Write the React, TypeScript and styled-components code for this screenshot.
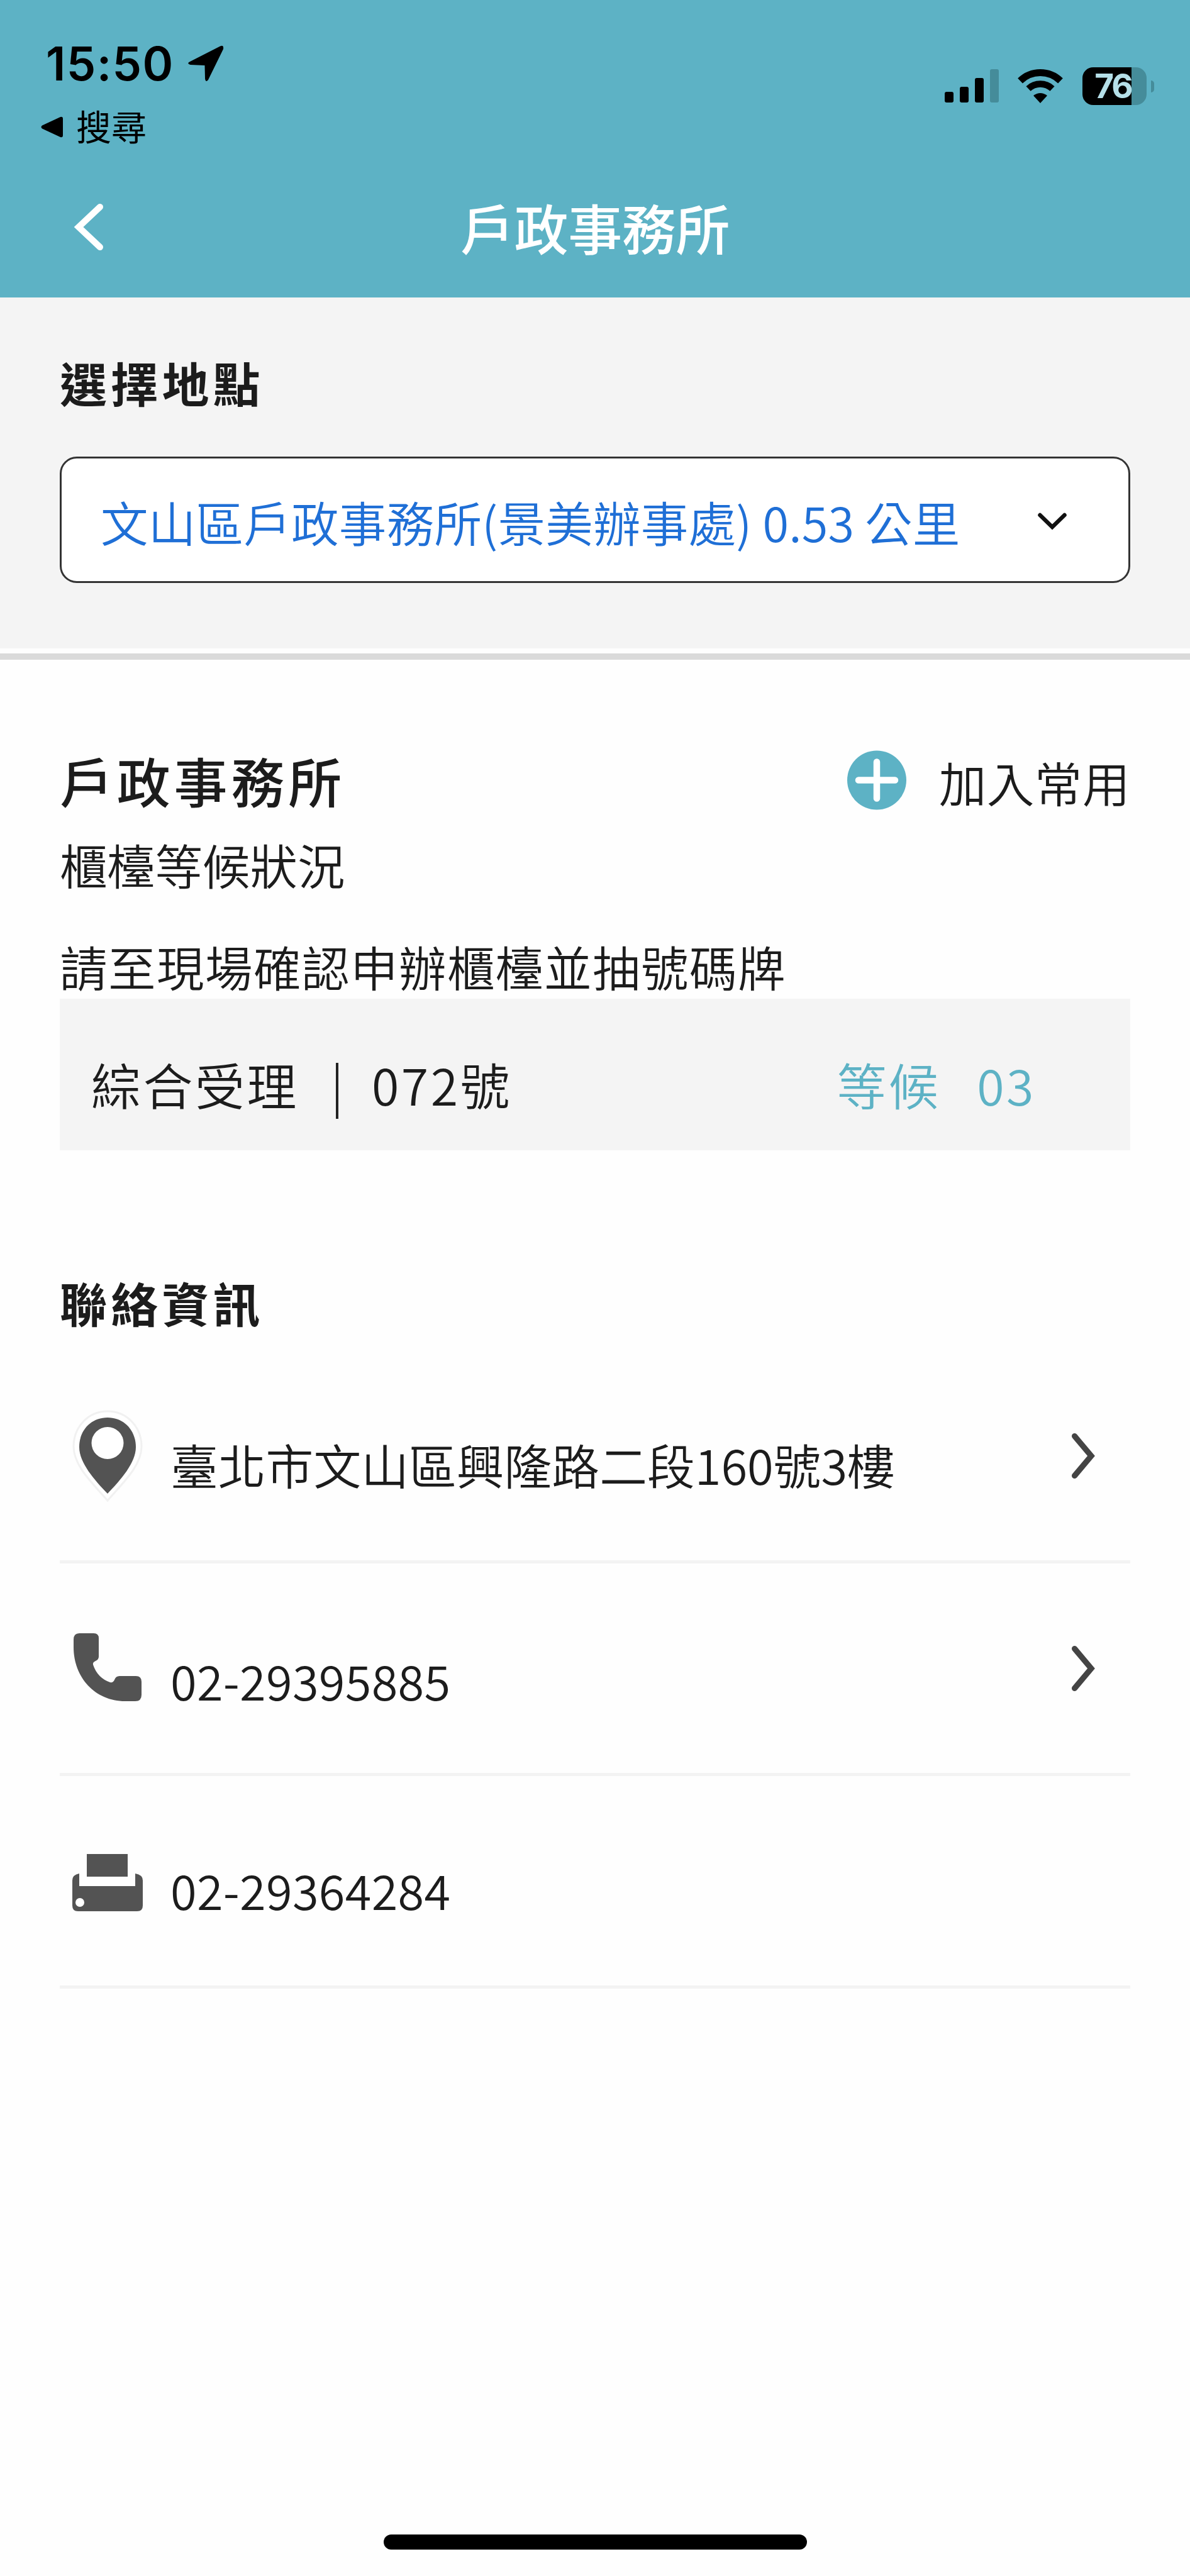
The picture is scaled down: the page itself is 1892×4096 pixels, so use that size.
import React from 'react';
import styled, { createGlobalStyle } from 'styled-components';

const teal = '#5db2c5';

const GlobalStyle = createGlobalStyle`
  * { box-sizing: border-box; }
  body {
    margin: 0;
    background: #fefefe;
    color: #1c1c1c;
    font-family: "Noto Sans CJK TC", "Noto Sans", sans-serif;
    font-weight: 350;
    white-space: nowrap;
  }
`;

const Screen = styled.div`
  width: 1892px;
  height: 4096px;
  display: flex;
  flex-direction: column;
  overflow: hidden;
`;

const Header = styled.header`
  height: 473px;
  flex: none;
  background: ${teal};
`;

const StatusBar = styled.div`
  height: 249px;
  display: flex;
  justify-content: space-between;
  align-items: flex-start;
  color: #000;
`;

const StatusLeft = styled.div`
  padding: 71px 0 0 65px;
`;

const Clock = styled.div`
  display: flex;
  align-items: center;
  height: 60px;
  padding-left: 8px;
  gap: 22px;
  font: 600 74px/60px Inter, sans-serif;
  letter-spacing: 1.4px;
`;

const ReturnLink = styled.div`
  display: flex;
  align-items: center;
  height: 60px;
  margin-top: 38px;
  gap: 21px;
  font-size: 56px;
  line-height: 60px;
  font-weight: 400;
  & > svg { margin-top: 6px; }
`;

const StatusRight = styled.div`
  display: flex;
  align-items: center;
  padding: 107px 57px 0 0;
  height: 167px;
`;

const WifiIcon = styled.svg`
  margin-left: 29px;
`;

const Battery = styled.div`
  display: flex;
  align-items: center;
  justify-content: center;
  width: 102px;
  height: 60px;
  margin-left: 30px;
  padding-right: 5px;
  border-radius: 17px;
  background: linear-gradient(90deg, #000 76%, #458c9a 76%);
  color: #b5dfe8;
  font: 700 53px/60px Inter, sans-serif;
  letter-spacing: -3px;
`;

const BatteryCap = styled.div`
  width: 5px;
  height: 19px;
  margin-left: 7px;
  border-radius: 0 5px 5px 0;
  background: #458c9a;
`;

const NavBar = styled.div`
  height: 224px;
  display: grid;
  grid-template-columns: 300px 1fr 300px;
  align-items: center;
  color: #fff;
`;

const NavBack = styled.button`
  border: 0;
  padding: 0 0 0 115px;
  background: none;
  display: flex;
`;

const NavTitle = styled.h1`
  margin: 0;
  text-align: center;
  font-size: 86px;
  line-height: 100px;
  font-weight: 500;
  letter-spacing: -0.4px;
`;

const PickerPanel = styled.section`
  flex: none;
  padding: 95px 95px 104px;
  background: #f4f4f4;
`;

const SectionTitle = styled.h2`
  margin: 0;
  font-size: 75px;
  line-height: 80px;
  font-weight: 700;
  letter-spacing: 6.2px;
`;

const Select = styled.div`
  display: flex;
  align-items: center;
  justify-content: space-between;
  height: 201px;
  margin-top: 78px;
  padding: 4px 98px 0 62px;
  border: 3px solid #333;
  border-radius: 27px;
  background: #fff;
  color: #1f6fd6;
  font-size: 75.6px;
  line-height: 80px;
  letter-spacing: 0.18px;
`;

const PanelEdge = styled.div`
  flex: none;
  height: 10px;
  margin-top: 8px;
  background: #dadada;
`;

const Main = styled.main`
  padding: 141px 95px 0;
`;

const OfficeRow = styled.div`
  display: flex;
  justify-content: space-between;
  align-items: center;
  height: 100px;
`;

const OfficeName = styled.h2`
  margin: 0;
  font-size: 85px;
  line-height: 98px;
  font-weight: 500;
  letter-spacing: 5.8px;
`;

const AddButton = styled.button`
  display: flex;
  align-items: center;
  gap: 52px;
  border: 0;
  padding: 0;
  background: none;
  font: inherit;
  color: inherit;
  font-size: 75.6px;
  line-height: 80px;
  letter-spacing: 0.5px;
  & > span { margin-top: 5px; }
`;

const Line = styled.p<{ $top: number; $spacing: number }>`
  margin: ${p => p.$top}px 0 0;
  font-size: 75.6px;
  line-height: 80px;
  letter-spacing: ${p => p.$spacing}px;
`;

const QueueCard = styled.div`
  display: flex;
  align-items: center;
  height: 241px;
  margin-top: 12px;
  padding: 30px 150px 0 50px;
  background: #f4f4f4;
  font-size: 79px;
  line-height: 90px;
  letter-spacing: 3.5px;
`;

const Bar = styled.span`
  width: 4px;
  height: 89px;
  margin: 22px 53px 0 59px;
  background: #222;
`;

const Waiting = styled.span`
  display: flex;
  gap: 58px;
  margin-left: auto;
  color: ${teal};
`;

const Contact = styled.section`
  padding-top: 202px;
`;

const ContactList = styled.div`
  margin-top: 37px;
`;

const ContactRow = styled.div`
  display: flex;
  align-items: center;
  height: 338px;
  padding-right: 56px;
  border-bottom: 5px solid #f3f3f3;
`;

const IconSlot = styled.div<{ $drop?: number }>`
  display: flex;
  justify-content: center;
  width: 151px;
  padding-top: ${p => Math.max(p.$drop ?? 0, 0) * 2}px;
  padding-bottom: ${p => Math.max(-(p.$drop ?? 0), 0) * 2}px;
  margin-right: 25px;
`;

const ContactText = styled.span<{ $drop: number; $spacing?: number }>`
  flex: 1;
  padding-top: ${p => p.$drop * 2}px;
  font-size: 75.8px;
  line-height: 80px;
  letter-spacing: ${p => p.$spacing ?? 0}px;
`;

const HomeIndicator = styled.div`
  flex: none;
  width: 673px;
  height: 24px;
  margin: auto auto 42px;
  border-radius: 12px;
  background: #000;
`;

const Forward = () => (
  <svg width="38" height="74" viewBox="0 0 38 74">
    <path d="M5.500 5.500 L32 37 L5.500 68.500" fill="none" stroke="#444" strokeWidth="9" strokeLinecap="round" />
  </svg>
);

const PinIcon = () => (
  <svg width="116" height="150" viewBox="0 0 116 150">
    <path
      d="M58 4 C28 4 4 28 4 60 C4 91 34 118 58 146 C82 118 112 91 112 60 C112 28 88 4 58 4Z"
      fill="#fff" stroke="#f1f1f1" strokeWidth="3"
    />
    <path
      fillRule="evenodd"
      d="M58 14 C32 14 13 34 13 61 C13 86 37 113 58 135 C79 113 103 86 103 61 C103 34 84 14 58 14Z M58 29 a25.500 25.500 0 1 1 0 51 a25.500 25.500 0 1 1 0 -51Z"
      fill="#535353"
    />
  </svg>
);

const PhoneIcon = () => (
  <svg width="108" height="108" viewBox="0 0 108 108">
    <path
      d="M9 0 H32 Q40 0 40 8 V37 Q40 42 35 44 Q30 46 31 50 Q38 71 58 78 Q63 79 65 74 Q67 68 73 68 H99 Q108 68 108 77 V98 Q108 108 98 108 H82 C34 108 0 70 0 22 V10 Q0 0 9 0Z"
      fill="#535353"
    />
  </svg>
);

const PrinterIcon = () => (
  <svg width="112" height="91" viewBox="0 0 112 91">
    <rect x="23" y="0" width="65" height="36" fill="#535353" />
    <path d="M11 31 V51 H100 V31 Q112 33 112 42 V82 Q112 91 103 91 H9 Q0 91 0 82 V42 Q0 33 11 31Z" fill="#535353" />
    <ellipse cx="12" cy="77" rx="7" ry="7" fill="#fff" />
  </svg>
);

export default function App() {
  return (
    <Screen>
      <GlobalStyle />
      <Header>
        <StatusBar>
          <StatusLeft>
            <Clock>
              15:50
              <svg width="57" height="58" viewBox="0 0 57 58">
                <path d="M3 26 L51 1.500 Q57 -1 56 6 L32 55 Q28 60 27 53 L26.500 32 L4 31 Q-3 29 3 26Z" fill="#000" />
              </svg>
            </Clock>
            <ReturnLink>
              <svg width="35" height="34" viewBox="0 0 35 34">
                <path d="M2 14.500 L31 1 Q35 0 35 4 V30 Q35 34 31 33 L2 19.500 Q-1 17 2 14.500Z" fill="#000" />
              </svg>
              搜尋
            </ReturnLink>
          </StatusLeft>
          <StatusRight>
            <svg width="86" height="54" viewBox="0 0 86 54">
              <rect x="0" y="36" width="14" height="17" rx="3" fill="#000" />
              <rect x="24" y="28" width="14" height="25" rx="3" fill="#000" />
              <rect x="48" y="14" width="14" height="39" rx="3" fill="#000" />
              <rect x="72" y="0" width="14" height="53" rx="3" fill="#458c9a" />
            </svg>
            <WifiIcon width="74" height="54" viewBox="0 0 74 54">
              <path d="M5 18.500 A46 46 0 0 1 69 18.500" fill="none" stroke="#000" strokeWidth="11" />
              <path d="M18 31 A28 28 0 0 1 56 31" fill="none" stroke="#000" strokeWidth="10.500" />
              <path d="M26 42 Q37 34 48 42 L37 54Z" fill="#000" />
            </WifiIcon>
            <Battery>76</Battery>
            <BatteryCap />
          </StatusRight>
        </StatusBar>
        <NavBar>
          <NavBack aria-label="返回">
            <svg width="50" height="76" viewBox="0 0 50 76">
              <path d="M44 6 L10 38 L44 70" fill="none" stroke="#fff" strokeWidth="10" strokeLinecap="round" />
            </svg>
          </NavBack>
          <NavTitle>戶政事務所</NavTitle>
        </NavBar>
      </Header>

      <PickerPanel>
        <SectionTitle>選擇地點</SectionTitle>
        <Select>
          <span>文山區戶政事務所(景美辦事處) 0.53 公里</span>
          <svg width="46" height="28" viewBox="0 0 46 28">
            <path d="M3.500 4 L23 23 L42.500 4" fill="none" stroke="#111" strokeWidth="6.500" strokeLinecap="round" />
          </svg>
        </Select>
      </PickerPanel>
      <PanelEdge />

      <Main>
        <OfficeRow>
          <OfficeName>戶政事務所</OfficeName>
          <AddButton>
            <svg width="94" height="95" viewBox="0 0 94 95">
              <circle cx="47" cy="47.500" r="47" fill={teal} />
              <path d="M18 47.500 H76 M47 18.500 V76.500" stroke="#fff" strokeWidth="10.500" strokeLinecap="round" />
            </svg>
            <span>加入常用</span>
          </AddButton>
        </OfficeRow>
        <Line $top={44} $spacing={0}>櫃檯等候狀況</Line>
        <Line $top={82} $spacing={1.4}>請至現場確認申辦櫃檯並抽號碼牌</Line>
        <QueueCard>
          <span>綜合受理</span>
          <Bar />
          <span>072號</span>
          <Waiting>
            <span>等候</span>
            <span>03</span>
          </Waiting>
        </QueueCard>

        <Contact>
          <SectionTitle>聯絡資訊</SectionTitle>
          <ContactList>
            <ContactRow>
              <IconSlot><PinIcon /></IconSlot>
              <ContactText $drop={13}>臺北市文山區興隆路二段160號3樓</ContactText>
              <Forward />
            </ContactRow>
            <ContactRow>
              <IconSlot $drop={-2}><PhoneIcon /></IconSlot>
              <ContactText $drop={18} $spacing={0.3}>02-29395885</ContactText>
              <Forward />
            </ContactRow>
            <ContactRow>
              <IconSlot $drop={3}><PrinterIcon /></IconSlot>
              <ContactText $drop={13} $spacing={0.3}>02-29364284</ContactText>
            </ContactRow>
          </ContactList>
        </Contact>
      </Main>
      <HomeIndicator />
    </Screen>
  );
}
